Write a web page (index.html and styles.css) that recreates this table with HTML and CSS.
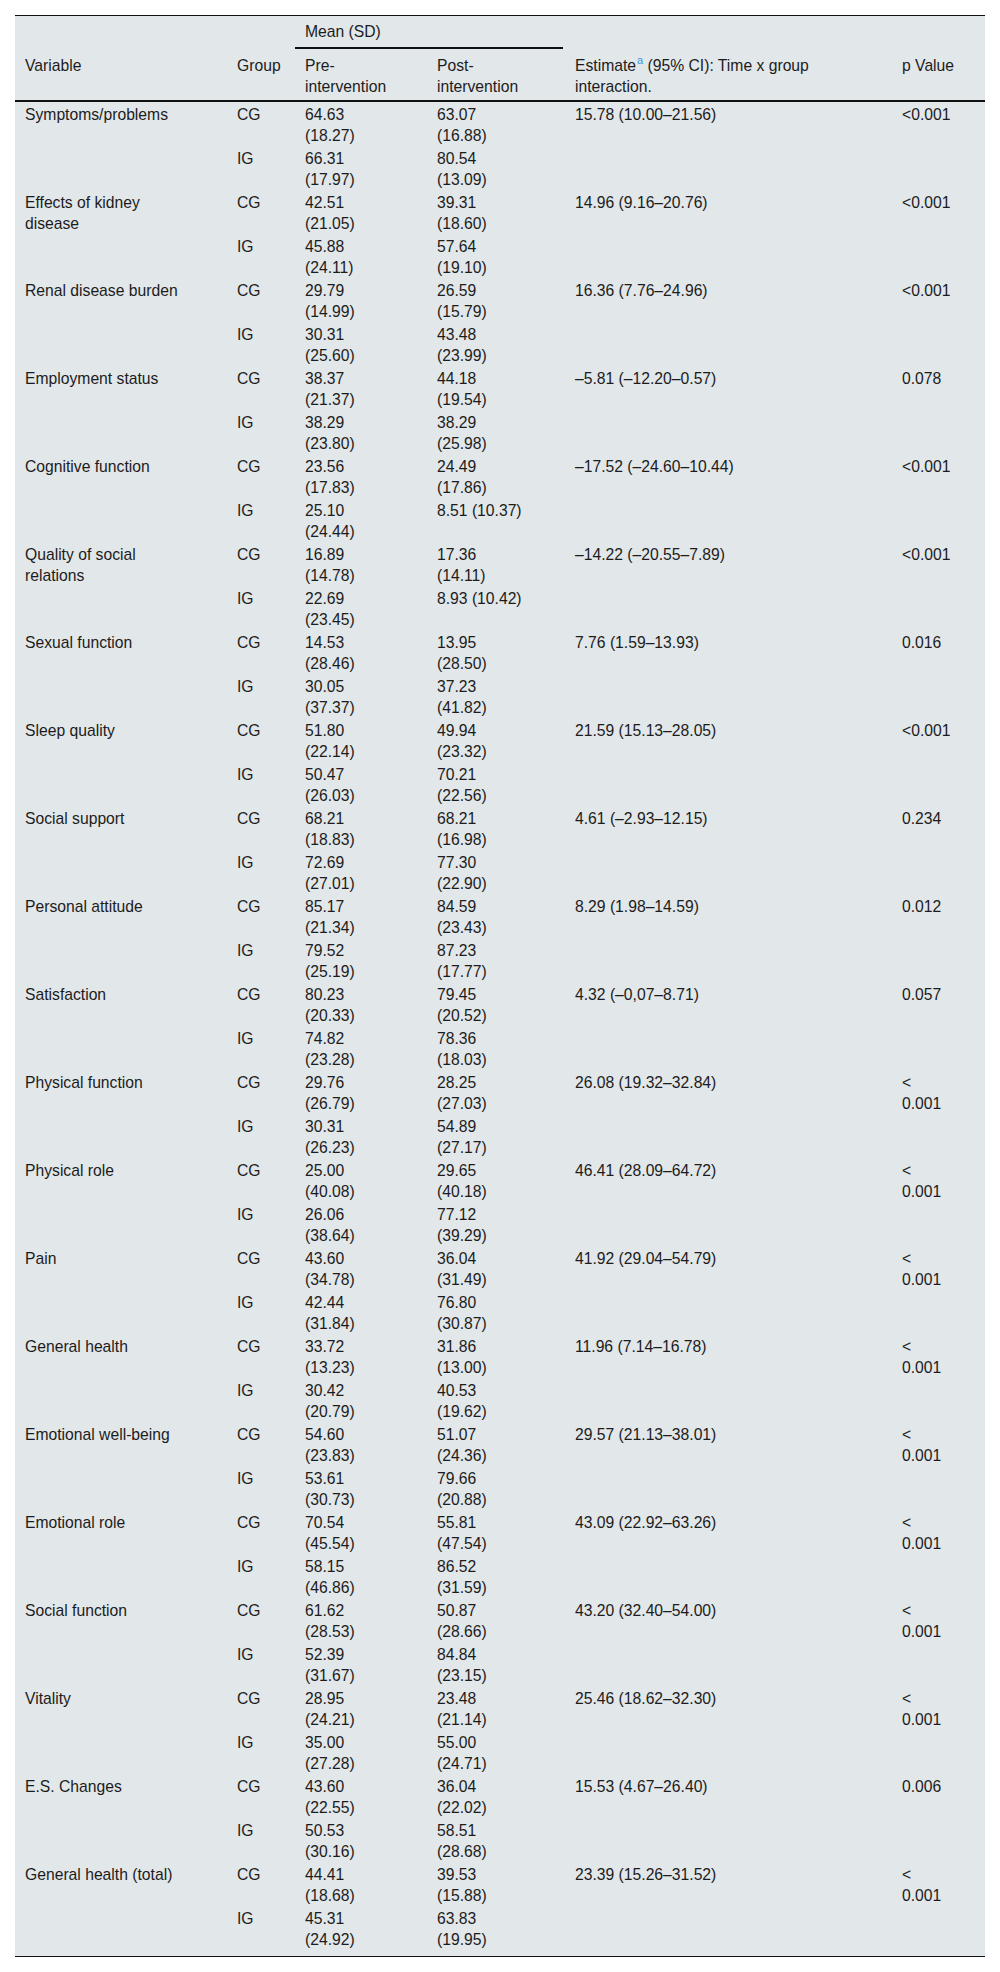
FILE: index.html
```html
<!DOCTYPE html>
<html lang="en">
<head>
<meta charset="utf-8">
<title>Table</title>
<link rel="stylesheet" href="styles.css">
</head>
<body>
<div class="wrap">
<table class="data">
<colgroup>
<col class="c-var"><col class="c-grp"><col class="c-pre"><col class="c-post"><col class="c-est"><col class="c-p">
</colgroup>
<thead>
<tr class="h1">
<th></th><th></th><th colspan="2" class="mean">Mean (SD)</th><th></th><th></th>
</tr>
<tr class="h2">
<th class="var">Variable</th><th>Group</th><th class="num">Pre-intervention</th><th class="num">Post-intervention</th><th class="est">Estimate<sup class="fn">a</sup> (95% CI): Time x group interaction.</th><th>p Value</th>
</tr>
</thead>
<tbody>
<tr><td class="var">Symptoms/problems</td><td>CG</td><td class="num">64.63 (18.27)</td><td class="num">63.07 (16.88)</td><td class="est">15.78 (10.00–21.56)</td><td>&lt;0.001</td></tr>
<tr><td class="var"></td><td>IG</td><td class="num">66.31 (17.97)</td><td class="num">80.54 (13.09)</td><td class="est"></td><td></td></tr>
<tr><td class="var">Effects of kidney disease</td><td>CG</td><td class="num">42.51 (21.05)</td><td class="num">39.31 (18.60)</td><td class="est">14.96 (9.16–20.76)</td><td>&lt;0.001</td></tr>
<tr><td class="var"></td><td>IG</td><td class="num">45.88 (24.11)</td><td class="num">57.64 (19.10)</td><td class="est"></td><td></td></tr>
<tr><td class="var">Renal disease burden</td><td>CG</td><td class="num">29.79 (14.99)</td><td class="num">26.59 (15.79)</td><td class="est">16.36 (7.76–24.96)</td><td>&lt;0.001</td></tr>
<tr><td class="var"></td><td>IG</td><td class="num">30.31 (25.60)</td><td class="num">43.48 (23.99)</td><td class="est"></td><td></td></tr>
<tr><td class="var">Employment status</td><td>CG</td><td class="num">38.37 (21.37)</td><td class="num">44.18 (19.54)</td><td class="est">–5.81 (–12.20–0.57)</td><td>0.078</td></tr>
<tr><td class="var"></td><td>IG</td><td class="num">38.29 (23.80)</td><td class="num">38.29 (25.98)</td><td class="est"></td><td></td></tr>
<tr><td class="var">Cognitive function</td><td>CG</td><td class="num">23.56 (17.83)</td><td class="num">24.49 (17.86)</td><td class="est">–17.52 (–24.60–10.44)</td><td>&lt;0.001</td></tr>
<tr><td class="var"></td><td>IG</td><td class="num">25.10 (24.44)</td><td class="num">8.51 (10.37)</td><td class="est"></td><td></td></tr>
<tr><td class="var">Quality of social relations</td><td>CG</td><td class="num">16.89 (14.78)</td><td class="num">17.36 (14.11)</td><td class="est">–14.22 (–20.55–7.89)</td><td>&lt;0.001</td></tr>
<tr><td class="var"></td><td>IG</td><td class="num">22.69 (23.45)</td><td class="num">8.93 (10.42)</td><td class="est"></td><td></td></tr>
<tr><td class="var">Sexual function</td><td>CG</td><td class="num">14.53 (28.46)</td><td class="num">13.95 (28.50)</td><td class="est">7.76 (1.59–13.93)</td><td>0.016</td></tr>
<tr><td class="var"></td><td>IG</td><td class="num">30.05 (37.37)</td><td class="num">37.23 (41.82)</td><td class="est"></td><td></td></tr>
<tr><td class="var">Sleep quality</td><td>CG</td><td class="num">51.80 (22.14)</td><td class="num">49.94 (23.32)</td><td class="est">21.59 (15.13–28.05)</td><td>&lt;0.001</td></tr>
<tr><td class="var"></td><td>IG</td><td class="num">50.47 (26.03)</td><td class="num">70.21 (22.56)</td><td class="est"></td><td></td></tr>
<tr><td class="var">Social support</td><td>CG</td><td class="num">68.21 (18.83)</td><td class="num">68.21 (16.98)</td><td class="est">4.61 (–2.93–12.15)</td><td>0.234</td></tr>
<tr><td class="var"></td><td>IG</td><td class="num">72.69 (27.01)</td><td class="num">77.30 (22.90)</td><td class="est"></td><td></td></tr>
<tr><td class="var">Personal attitude</td><td>CG</td><td class="num">85.17 (21.34)</td><td class="num">84.59 (23.43)</td><td class="est">8.29 (1.98–14.59)</td><td>0.012</td></tr>
<tr><td class="var"></td><td>IG</td><td class="num">79.52 (25.19)</td><td class="num">87.23 (17.77)</td><td class="est"></td><td></td></tr>
<tr><td class="var">Satisfaction</td><td>CG</td><td class="num">80.23 (20.33)</td><td class="num">79.45 (20.52)</td><td class="est">4.32 (–0,07–8.71)</td><td>0.057</td></tr>
<tr><td class="var"></td><td>IG</td><td class="num">74.82 (23.28)</td><td class="num">78.36 (18.03)</td><td class="est"></td><td></td></tr>
<tr><td class="var">Physical function</td><td>CG</td><td class="num">29.76 (26.79)</td><td class="num">28.25 (27.03)</td><td class="est">26.08 (19.32–32.84)</td><td>&lt;<br>0.001</td></tr>
<tr><td class="var"></td><td>IG</td><td class="num">30.31 (26.23)</td><td class="num">54.89 (27.17)</td><td class="est"></td><td></td></tr>
<tr><td class="var">Physical role</td><td>CG</td><td class="num">25.00 (40.08)</td><td class="num">29.65 (40.18)</td><td class="est">46.41 (28.09–64.72)</td><td>&lt;<br>0.001</td></tr>
<tr><td class="var"></td><td>IG</td><td class="num">26.06 (38.64)</td><td class="num">77.12 (39.29)</td><td class="est"></td><td></td></tr>
<tr><td class="var">Pain</td><td>CG</td><td class="num">43.60 (34.78)</td><td class="num">36.04 (31.49)</td><td class="est">41.92 (29.04–54.79)</td><td>&lt;<br>0.001</td></tr>
<tr><td class="var"></td><td>IG</td><td class="num">42.44 (31.84)</td><td class="num">76.80 (30.87)</td><td class="est"></td><td></td></tr>
<tr><td class="var">General health</td><td>CG</td><td class="num">33.72 (13.23)</td><td class="num">31.86 (13.00)</td><td class="est">11.96 (7.14–16.78)</td><td>&lt;<br>0.001</td></tr>
<tr><td class="var"></td><td>IG</td><td class="num">30.42 (20.79)</td><td class="num">40.53 (19.62)</td><td class="est"></td><td></td></tr>
<tr><td class="var">Emotional well-being</td><td>CG</td><td class="num">54.60 (23.83)</td><td class="num">51.07 (24.36)</td><td class="est">29.57 (21.13–38.01)</td><td>&lt;<br>0.001</td></tr>
<tr><td class="var"></td><td>IG</td><td class="num">53.61 (30.73)</td><td class="num">79.66 (20.88)</td><td class="est"></td><td></td></tr>
<tr><td class="var">Emotional role</td><td>CG</td><td class="num">70.54 (45.54)</td><td class="num">55.81 (47.54)</td><td class="est">43.09 (22.92–63.26)</td><td>&lt;<br>0.001</td></tr>
<tr><td class="var"></td><td>IG</td><td class="num">58.15 (46.86)</td><td class="num">86.52 (31.59)</td><td class="est"></td><td></td></tr>
<tr><td class="var">Social function</td><td>CG</td><td class="num">61.62 (28.53)</td><td class="num">50.87 (28.66)</td><td class="est">43.20 (32.40–54.00)</td><td>&lt;<br>0.001</td></tr>
<tr><td class="var"></td><td>IG</td><td class="num">52.39 (31.67)</td><td class="num">84.84 (23.15)</td><td class="est"></td><td></td></tr>
<tr><td class="var">Vitality</td><td>CG</td><td class="num">28.95 (24.21)</td><td class="num">23.48 (21.14)</td><td class="est">25.46 (18.62–32.30)</td><td>&lt;<br>0.001</td></tr>
<tr><td class="var"></td><td>IG</td><td class="num">35.00 (27.28)</td><td class="num">55.00 (24.71)</td><td class="est"></td><td></td></tr>
<tr><td class="var">E.S. Changes</td><td>CG</td><td class="num">43.60 (22.55)</td><td class="num">36.04 (22.02)</td><td class="est">15.53 (4.67–26.40)</td><td>0.006</td></tr>
<tr><td class="var"></td><td>IG</td><td class="num">50.53 (30.16)</td><td class="num">58.51 (28.68)</td><td class="est"></td><td></td></tr>
<tr><td class="var">General health (total)</td><td>CG</td><td class="num">44.41 (18.68)</td><td class="num">39.53 (15.88)</td><td class="est">23.39 (15.26–31.52)</td><td>&lt;<br>0.001</td></tr>
<tr class="last"><td class="var"></td><td>IG</td><td class="num">45.31 (24.92)</td><td class="num">63.83 (19.95)</td><td class="est"></td><td></td></tr>
</tbody>
</table>
</div>
</body>
</html>
```

FILE: styles.css
```css
html, body {
  margin: 0;
  padding: 0;
  background: #ffffff;
}

.wrap {
  padding: 15px;
}

.data {
  width: 970px;
  table-layout: fixed;
  border-collapse: separate;
  border-spacing: 0;
  background: #e2e7ea;
  border-top: 1px solid #111;
  border-bottom: 1px solid #111;
  font-family: "Liberation Sans", Arial, sans-serif;
  font-size: 15.7px;
  line-height: 21px;
  color: #1c1c1c;
}

.c-var { width: 212px; }
.c-grp { width: 68px; }
.c-pre { width: 132px; }
.c-post { width: 136px; }
.c-est { width: 329px; }
.c-p { width: 93px; }

.data th,
.data td {
  text-align: left;
  vertical-align: top;
  font-weight: normal;
  padding: 2px 10px 0 10px;
}

.data .h1 th {
  padding: 5px 10px 5px 10px;
}

.data .h1 th.mean {
  border-bottom: 2px solid #111;
}

.data .h2 th {
  padding: 6px 10px 3px 10px;
  border-bottom: 2px solid #111;
}

.data th.var,
.data td.var {
  padding-right: 42px;
}

.data th.num,
.data td.num {
  padding-right: 36px;
}

.data th.est,
.data td.est {
  padding-left: 12px;
  padding-right: 20px;
}

.fn {
  color: #3d97e0;
  font-size: 11px;
  line-height: 11px;
  vertical-align: 7px;
  margin-left: 1px;
}

.data .last td {
  padding-bottom: 6px;
}
```
